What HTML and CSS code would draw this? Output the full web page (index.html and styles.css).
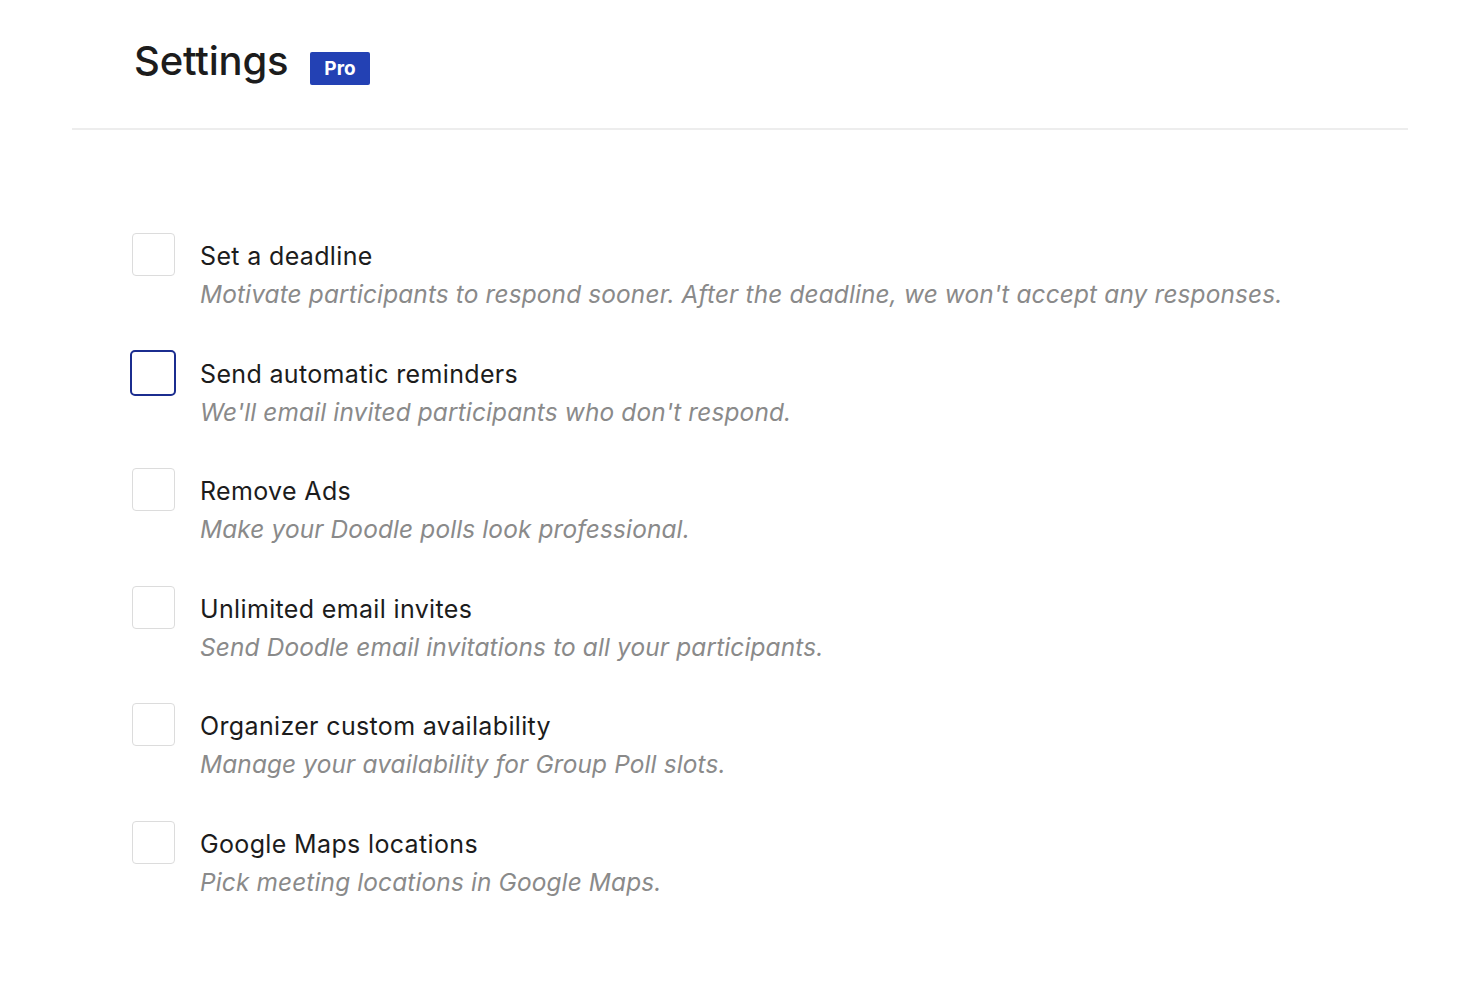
FILE: index.html
```html
<!DOCTYPE html>
<html lang="en">
<head>
<meta charset="utf-8">
<title>Settings</title>
<link rel="stylesheet" href="styles.css">
</head>
<body>
<div class="page">
  <header class="header">
    <h1 class="title">Settings</h1>
    <span class="badge">Pro</span>
  </header>
  <ul class="options">
    <li class="option">
      <span class="box"></span>
      <div class="text">
        <div class="label">Set a deadline</div>
        <div class="desc">Motivate participants to respond sooner. After the deadline, we won't accept any responses.</div>
      </div>
    </li>
    <li class="option">
      <span class="box focus"></span>
      <div class="text">
        <div class="label">Send automatic reminders</div>
        <div class="desc">We'll email invited participants who don't respond.</div>
      </div>
    </li>
    <li class="option">
      <span class="box"></span>
      <div class="text">
        <div class="label">Remove Ads</div>
        <div class="desc">Make your Doodle polls look professional.</div>
      </div>
    </li>
    <li class="option">
      <span class="box"></span>
      <div class="text">
        <div class="label">Unlimited email invites</div>
        <div class="desc">Send Doodle email invitations to all your participants.</div>
      </div>
    </li>
    <li class="option">
      <span class="box"></span>
      <div class="text">
        <div class="label">Organizer custom availability</div>
        <div class="desc">Manage your availability for Group Poll slots.</div>
      </div>
    </li>
    <li class="option">
      <span class="box"></span>
      <div class="text">
        <div class="label">Google Maps locations</div>
        <div class="desc">Pick meeting locations in Google Maps.</div>
      </div>
    </li>
  </ul>
</div>
</body>
</html>
```
FILE: styles.css
```css
* { box-sizing: border-box; }
html, body { margin: 0; padding: 0; background: #fff; }
body { font-family: Inter, "Liberation Sans", sans-serif; color: #1c1c1c; }
.page { padding: 0 72px; }
.header {
  display: flex;
  align-items: flex-start;
  gap: 22px;
  padding: 37px 0 0 62px;
  height: 130px;
  border-bottom: 2px solid #ededed;
}
.title {
  margin: 0;
  font-size: 40px;
  font-weight: 500;
  line-height: 48px;
  letter-spacing: -0.2px;
}
.badge {
  margin-top: 15px;
  background: #2341b4;
  color: #fff;
  font-weight: 700;
  font-size: 19px;
  line-height: 33px;
  height: 33px;
  padding: 0 14px;
  border-radius: 2px;
}
.options {
  list-style: none;
  margin: 0;
  padding: 101px 0 0 60px;
}
.option {
  display: flex;
  gap: 25px;
  height: 117.6px;
}
.box {
  flex: none;
  width: 43px;
  height: 43px;
  border: 1px solid #dcdcdc;
  border-radius: 4px;
  margin-top: 2px;
}
.box.focus {
  width: 46px;
  height: 46px;
  margin: 1px -1px 0 -2px;
  border: 2px solid #1b2d8f;
  border-radius: 5px;
}
.label {
  font-size: 25px;
  letter-spacing: 0.35px;
  line-height: 38px;
  margin-top: 6px;
}
.desc {
  font-size: 24.4px;
  letter-spacing: 0.15px;
  line-height: 38px;
  font-style: italic;
  color: #8a8a8a;
}
```
